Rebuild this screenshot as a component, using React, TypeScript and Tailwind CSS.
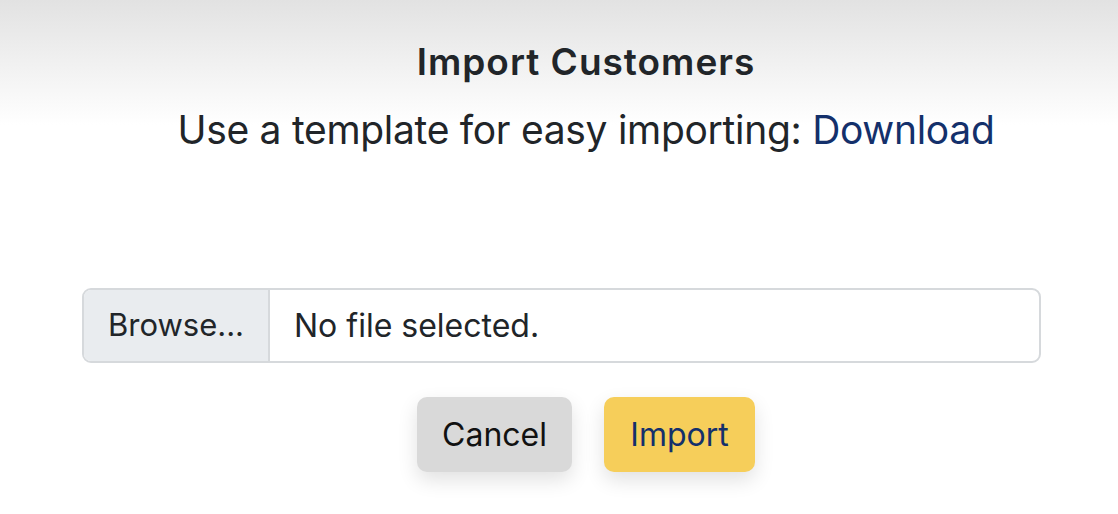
export default function App() {
  return (
    <div
      className="h-[514px] w-[1118px] overflow-hidden bg-[linear-gradient(to_bottom,#e2e2e2_0px,#ffffff_125px)]"
      style={{ fontFamily: "Inter, 'Noto Sans', sans-serif" }}
    >
      <div className="flex flex-col items-center pl-[54px] pt-[38px]">
        <h1 className="text-[37px] font-semibold leading-[48px] tracking-[1px] text-[#212529]">Import Customers</h1>
        <p className="mt-[20px] text-[39px] leading-[48px] tracking-[-0.3px] text-[#212529]">
          Use a template for easy importing: <a className="text-[#14306b]">Download</a>
        </p>
      </div>

      <div className="ml-[82px] mr-[77px] mt-[134px] flex h-[75px] overflow-hidden rounded-[9px] border-2 border-[#d6d9dc] bg-white text-[31px] text-[#212529]">
        <div className="flex w-[186px] items-center justify-center border-r-2 border-[#d6d9dc] bg-[#e9ecef]">Browse...</div>
        <div className="flex items-center pl-[24px] text-[32px]">No file selected.</div>
      </div>

      <div className="mt-[34px] flex justify-center gap-[32px] pl-[54px]">
        <button className="h-[75px] w-[155px] rounded-[10px] bg-[#d9d9d9] text-[32px] text-[#111] shadow-[0_8px_20px_rgba(0,0,0,0.12)]">
          Cancel
        </button>
        <button className="h-[75px] w-[151px] rounded-[10px] bg-[#f6ce5a] text-[32px] text-[#14306b] shadow-[0_8px_20px_rgba(0,0,0,0.12)]">
          Import
        </button>
      </div>
    </div>
  );
}
